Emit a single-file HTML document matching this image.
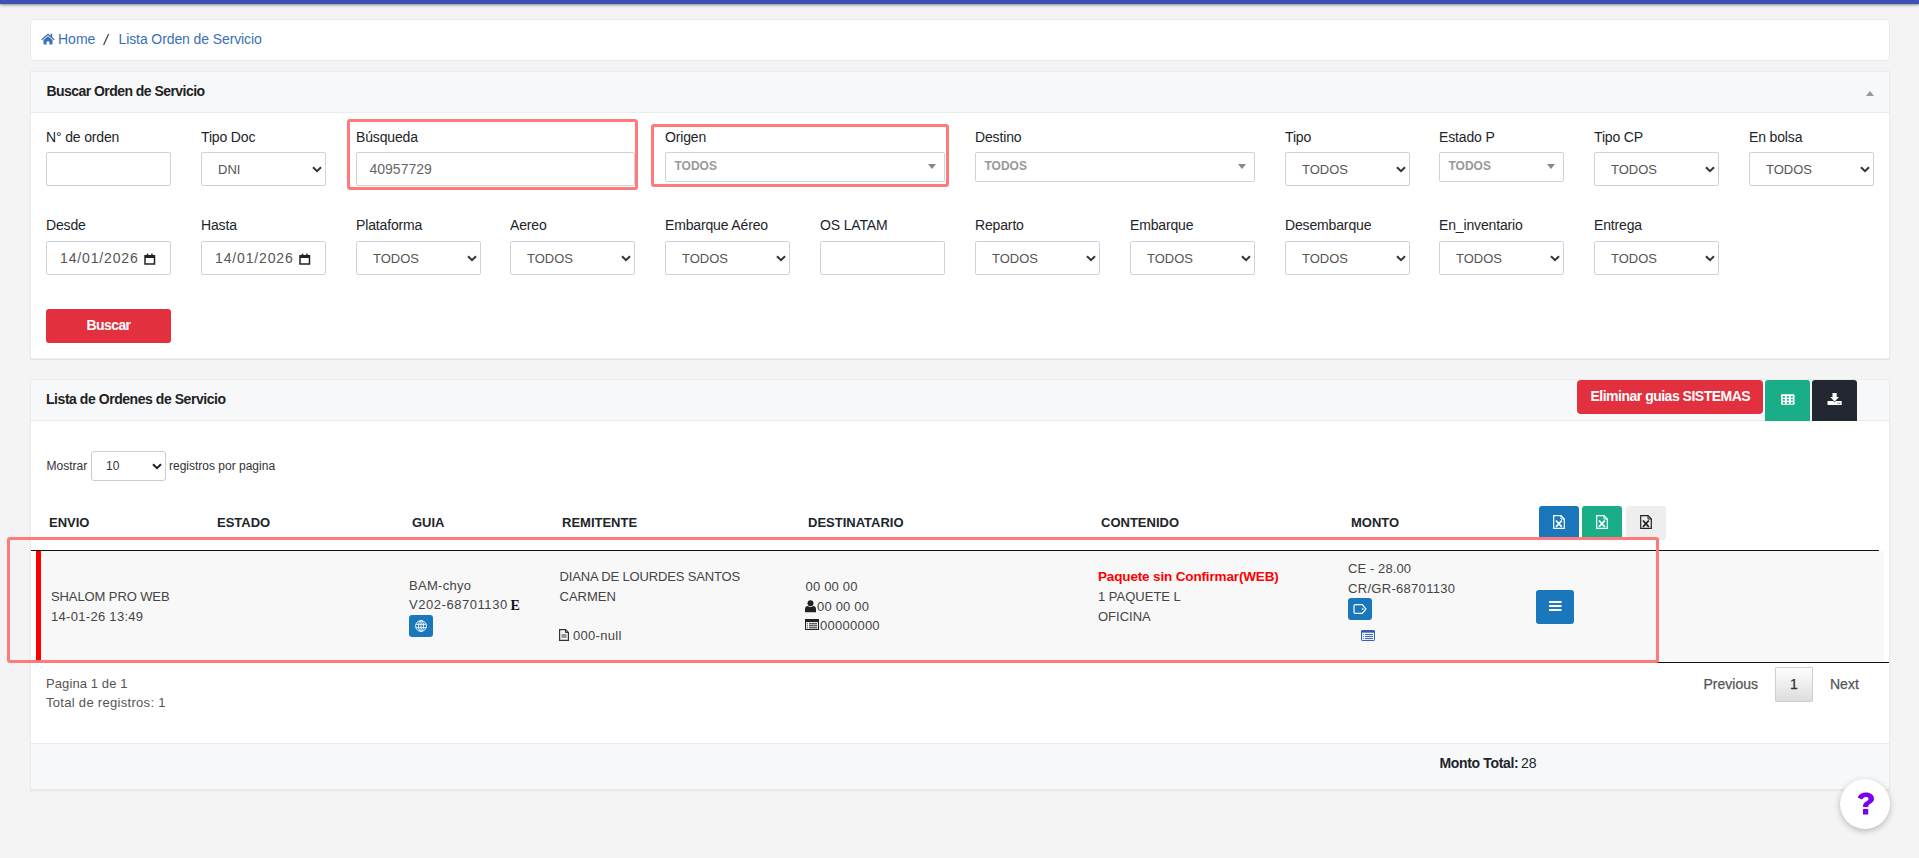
<!DOCTYPE html><html><head><meta charset="utf-8"><style>
*{box-sizing:border-box;margin:0;padding:0}
html,body{width:1919px;height:858px;overflow:hidden;background:#f4f4f4;font-family:"Liberation Sans",sans-serif;color:#212529}
.a{position:absolute;white-space:nowrap}
.b{position:absolute}
.topbar{position:absolute;left:0;top:0;width:1919px;height:4px;background:#3f51b5;box-shadow:0 1px 3px rgba(0,0,0,.45)}
.card{position:absolute;left:30px;width:1860px;background:#fff;border:1px solid #e8ebef}
.hdr{position:absolute;left:0;top:0;width:1858px;background:#f7f8fa;border-bottom:1px solid #e8ebef}
.inp{position:absolute;height:34px;border:1px solid #cbd4de;border-radius:2px;background:#fff}
.s2{position:absolute;height:30px;border:1px solid #cbd4de;border-radius:2px;background:#fff}
.tri{position:absolute;width:0;height:0;border-left:4px solid transparent;border-right:4px solid transparent;border-top:5px solid #888}
.ann{position:absolute;border:3px solid #ff7b7b;border-radius:3px}
</style></head><body>
<div class="topbar"></div>
<div class="card" style="top:19px;height:42px;border-radius:4px"></div>
<svg class="b" style="left:41px;top:33px" width="14" height="12" viewBox="0 0 14 12"><path d="M7 0.6 L0.3 6.3 L1.2 7.2 L7 2.3 L12.8 7.2 L13.7 6.3 L11.2 4.2 L11.2 0.8 L9.6 0.8 L9.6 2.8 Z M2.5 6.9 L2.5 11.6 L5.6 11.6 L5.6 8.4 L8.4 8.4 L8.4 11.6 L11.5 11.6 L11.5 6.9 L7 3.2 Z" fill="#3a70b6"/></svg>
<div class="a" style="left:58px;top:30.15px;font-size:14px;line-height:18px;color:#3a70b6;">Home</div>
<svg class="b" style="left:102px;top:33px" width="9" height="13" viewBox="0 0 9 13"><path d="M6.6 1 L1.6 12" stroke="#444" stroke-width="1.25"/></svg>
<div class="a" style="left:118.5px;top:30.15px;font-size:14px;line-height:18px;color:#3a70b6;letter-spacing:-0.1px;">Lista Orden de Servicio</div>
<div class="card" style="top:71px;height:288px;box-shadow:0 1px 1px rgba(0,0,0,.06)"><div class="hdr" style="height:41px"></div></div>
<div class="a" style="left:46.5px;top:82.15px;font-size:14px;line-height:18px;color:#222;font-weight:bold;letter-spacing:-0.55px;">Buscar Orden de Servicio</div>
<div class="tri" style="left:1866px;top:91px;border-top:none;border-bottom:5px solid #999"></div>
<div class="a" style="left:46px;top:128.15px;font-size:14px;line-height:18px;color:#212529;letter-spacing:-0.15px;">N° de orden</div>
<div class="inp" style="left:46px;top:152px;width:125px"></div>
<div class="a" style="left:201px;top:128.15px;font-size:14px;line-height:18px;color:#212529;letter-spacing:-0.15px;">Tipo Doc</div>
<div class="inp" style="left:201px;top:152px;width:125px"></div>
<div class="a" style="left:218px;top:161.00px;font-size:13px;line-height:17px;color:#555;">DNI</div>
<svg class="b" style="left:312px;top:166px" width="10" height="7" viewBox="0 0 10 7"><path d="M1 1.2 L5 5.2 L9 1.2" fill="none" stroke="#333" stroke-width="2"/></svg>
<div class="a" style="left:356px;top:128.15px;font-size:14px;line-height:18px;color:#212529;letter-spacing:-0.15px;">Búsqueda</div>
<div class="inp" style="left:356px;top:152px;width:279px"></div>
<div class="a" style="left:369.5px;top:160.15px;font-size:14px;line-height:18px;color:#666;">40957729</div>
<div class="a" style="left:665px;top:128.15px;font-size:14px;line-height:18px;color:#212529;letter-spacing:-0.15px;">Origen</div>
<div class="s2" style="left:665px;top:152px;width:280px"></div>
<div class="a" style="left:674.5px;top:157.84px;font-size:12px;line-height:16px;color:#999;font-weight:bold;">TODOS</div>
<div class="tri" style="left:928px;top:164px"></div>
<div class="a" style="left:975px;top:128.15px;font-size:14px;line-height:18px;color:#212529;letter-spacing:-0.15px;">Destino</div>
<div class="s2" style="left:975px;top:152px;width:280px"></div>
<div class="a" style="left:984.5px;top:157.84px;font-size:12px;line-height:16px;color:#999;font-weight:bold;">TODOS</div>
<div class="tri" style="left:1238px;top:164px"></div>
<div class="a" style="left:1285px;top:128.15px;font-size:14px;line-height:18px;color:#212529;letter-spacing:-0.15px;">Tipo</div>
<div class="inp" style="left:1285px;top:152px;width:125px"></div>
<div class="a" style="left:1302px;top:161.00px;font-size:13px;line-height:17px;color:#555;">TODOS</div>
<svg class="b" style="left:1396px;top:166px" width="10" height="7" viewBox="0 0 10 7"><path d="M1 1.2 L5 5.2 L9 1.2" fill="none" stroke="#333" stroke-width="2"/></svg>
<div class="a" style="left:1439px;top:128.15px;font-size:14px;line-height:18px;color:#212529;letter-spacing:-0.15px;">Estado P</div>
<div class="s2" style="left:1439px;top:152px;width:125px"></div>
<div class="a" style="left:1448.5px;top:157.84px;font-size:12px;line-height:16px;color:#999;font-weight:bold;">TODOS</div>
<div class="tri" style="left:1547px;top:164px"></div>
<div class="a" style="left:1594px;top:128.15px;font-size:14px;line-height:18px;color:#212529;letter-spacing:-0.15px;">Tipo CP</div>
<div class="inp" style="left:1594px;top:152px;width:125px"></div>
<div class="a" style="left:1611px;top:161.00px;font-size:13px;line-height:17px;color:#555;">TODOS</div>
<svg class="b" style="left:1705px;top:166px" width="10" height="7" viewBox="0 0 10 7"><path d="M1 1.2 L5 5.2 L9 1.2" fill="none" stroke="#333" stroke-width="2"/></svg>
<div class="a" style="left:1749px;top:128.15px;font-size:14px;line-height:18px;color:#212529;letter-spacing:-0.15px;">En bolsa</div>
<div class="inp" style="left:1749px;top:152px;width:125px"></div>
<div class="a" style="left:1766px;top:161.00px;font-size:13px;line-height:17px;color:#555;">TODOS</div>
<svg class="b" style="left:1860px;top:166px" width="10" height="7" viewBox="0 0 10 7"><path d="M1 1.2 L5 5.2 L9 1.2" fill="none" stroke="#333" stroke-width="2"/></svg>
<div class="a" style="left:46px;top:216.15px;font-size:14px;line-height:18px;color:#212529;letter-spacing:-0.15px;">Desde</div>
<div class="inp" style="left:46px;top:241px;width:125px"></div>
<div class="a" style="left:60px;top:249.15px;font-size:14px;line-height:18px;color:#555;letter-spacing:0.85px;">14/01/2026</div>
<svg class="b" style="left:143.5px;top:252.5px" width="12" height="12" viewBox="0 0 12 12"><path d="M1 2.8 H10.5 V11 H1 Z" fill="none" stroke="#222" stroke-width="1.5"/><rect x="1" y="2.3" width="9.5" height="2.7" fill="#222"/><rect x="2.8" y="0.6" width="1.5" height="2" fill="#222"/><rect x="7.2" y="0.6" width="1.5" height="2" fill="#222"/></svg>
<div class="a" style="left:201px;top:216.15px;font-size:14px;line-height:18px;color:#212529;letter-spacing:-0.15px;">Hasta</div>
<div class="inp" style="left:201px;top:241px;width:125px"></div>
<div class="a" style="left:215px;top:249.15px;font-size:14px;line-height:18px;color:#555;letter-spacing:0.85px;">14/01/2026</div>
<svg class="b" style="left:298.5px;top:252.5px" width="12" height="12" viewBox="0 0 12 12"><path d="M1 2.8 H10.5 V11 H1 Z" fill="none" stroke="#222" stroke-width="1.5"/><rect x="1" y="2.3" width="9.5" height="2.7" fill="#222"/><rect x="2.8" y="0.6" width="1.5" height="2" fill="#222"/><rect x="7.2" y="0.6" width="1.5" height="2" fill="#222"/></svg>
<div class="a" style="left:356px;top:216.15px;font-size:14px;line-height:18px;color:#212529;letter-spacing:-0.15px;">Plataforma</div>
<div class="inp" style="left:356px;top:241px;width:125px"></div>
<div class="a" style="left:373px;top:250.00px;font-size:13px;line-height:17px;color:#555;">TODOS</div>
<svg class="b" style="left:467px;top:255px" width="10" height="7" viewBox="0 0 10 7"><path d="M1 1.2 L5 5.2 L9 1.2" fill="none" stroke="#333" stroke-width="2"/></svg>
<div class="a" style="left:510px;top:216.15px;font-size:14px;line-height:18px;color:#212529;letter-spacing:-0.15px;">Aereo</div>
<div class="inp" style="left:510px;top:241px;width:125px"></div>
<div class="a" style="left:527px;top:250.00px;font-size:13px;line-height:17px;color:#555;">TODOS</div>
<svg class="b" style="left:621px;top:255px" width="10" height="7" viewBox="0 0 10 7"><path d="M1 1.2 L5 5.2 L9 1.2" fill="none" stroke="#333" stroke-width="2"/></svg>
<div class="a" style="left:665px;top:216.15px;font-size:14px;line-height:18px;color:#212529;letter-spacing:-0.15px;">Embarque Aéreo</div>
<div class="inp" style="left:665px;top:241px;width:125px"></div>
<div class="a" style="left:682px;top:250.00px;font-size:13px;line-height:17px;color:#555;">TODOS</div>
<svg class="b" style="left:776px;top:255px" width="10" height="7" viewBox="0 0 10 7"><path d="M1 1.2 L5 5.2 L9 1.2" fill="none" stroke="#333" stroke-width="2"/></svg>
<div class="a" style="left:820px;top:216.15px;font-size:14px;line-height:18px;color:#212529;letter-spacing:-0.15px;">OS LATAM</div>
<div class="inp" style="left:820px;top:241px;width:125px"></div>
<div class="a" style="left:975px;top:216.15px;font-size:14px;line-height:18px;color:#212529;letter-spacing:-0.15px;">Reparto</div>
<div class="inp" style="left:975px;top:241px;width:125px"></div>
<div class="a" style="left:992px;top:250.00px;font-size:13px;line-height:17px;color:#555;">TODOS</div>
<svg class="b" style="left:1086px;top:255px" width="10" height="7" viewBox="0 0 10 7"><path d="M1 1.2 L5 5.2 L9 1.2" fill="none" stroke="#333" stroke-width="2"/></svg>
<div class="a" style="left:1130px;top:216.15px;font-size:14px;line-height:18px;color:#212529;letter-spacing:-0.15px;">Embarque</div>
<div class="inp" style="left:1130px;top:241px;width:125px"></div>
<div class="a" style="left:1147px;top:250.00px;font-size:13px;line-height:17px;color:#555;">TODOS</div>
<svg class="b" style="left:1241px;top:255px" width="10" height="7" viewBox="0 0 10 7"><path d="M1 1.2 L5 5.2 L9 1.2" fill="none" stroke="#333" stroke-width="2"/></svg>
<div class="a" style="left:1285px;top:216.15px;font-size:14px;line-height:18px;color:#212529;letter-spacing:-0.15px;">Desembarque</div>
<div class="inp" style="left:1285px;top:241px;width:125px"></div>
<div class="a" style="left:1302px;top:250.00px;font-size:13px;line-height:17px;color:#555;">TODOS</div>
<svg class="b" style="left:1396px;top:255px" width="10" height="7" viewBox="0 0 10 7"><path d="M1 1.2 L5 5.2 L9 1.2" fill="none" stroke="#333" stroke-width="2"/></svg>
<div class="a" style="left:1439px;top:216.15px;font-size:14px;line-height:18px;color:#212529;letter-spacing:-0.15px;">En_inventario</div>
<div class="inp" style="left:1439px;top:241px;width:125px"></div>
<div class="a" style="left:1456px;top:250.00px;font-size:13px;line-height:17px;color:#555;">TODOS</div>
<svg class="b" style="left:1550px;top:255px" width="10" height="7" viewBox="0 0 10 7"><path d="M1 1.2 L5 5.2 L9 1.2" fill="none" stroke="#333" stroke-width="2"/></svg>
<div class="a" style="left:1594px;top:216.15px;font-size:14px;line-height:18px;color:#212529;letter-spacing:-0.15px;">Entrega</div>
<div class="inp" style="left:1594px;top:241px;width:125px"></div>
<div class="a" style="left:1611px;top:250.00px;font-size:13px;line-height:17px;color:#555;">TODOS</div>
<svg class="b" style="left:1705px;top:255px" width="10" height="7" viewBox="0 0 10 7"><path d="M1 1.2 L5 5.2 L9 1.2" fill="none" stroke="#333" stroke-width="2"/></svg>
<div class="b" style="left:46px;top:309px;width:125px;height:34px;background:#e2303f;border-radius:3px"></div>
<div class="a" style="left:0px;top:316.15px;font-size:14px;line-height:18px;color:#fff;font-weight:bold;letter-spacing:-0.6px;left:46px;width:125px;text-align:center;">Buscar</div>
<div class="card" style="top:379px;height:411px;box-shadow:0 1px 1px rgba(0,0,0,.06)"><div class="hdr" style="height:41px"></div><div class="b" style="left:0;top:363px;width:1858px;height:46px;background:#f7f8fa;border-top:1px solid #e8ebef"></div></div>
<div class="a" style="left:46px;top:390.15px;font-size:14px;line-height:18px;color:#222;font-weight:bold;letter-spacing:-0.45px;">Lista de Ordenes de Servicio</div>
<div class="b" style="left:1577px;top:380px;width:186px;height:34px;background:#e2303f;border-radius:4px"></div>
<div class="a" style="left:1590.5px;top:387.15px;font-size:14px;line-height:18px;color:#fff;font-weight:bold;letter-spacing:-0.5px;">Eliminar guias SISTEMAS</div>
<div class="b" style="left:1765px;top:380px;width:45px;height:41px;background:#1aae88;border-radius:3px 3px 0 0"></div>
<svg class="b" style="left:1781px;top:394px" width="14" height="11" viewBox="0 0 14 11"><rect x="0" y="0.2" width="13.5" height="10.6" rx="0.8" fill="#fff"/><g fill="#1aae88"><rect x="1.8" y="2" width="2" height="1.8"/><rect x="5.8" y="2" width="2" height="1.8"/><rect x="9.8" y="2" width="2" height="1.8"/><rect x="1.8" y="4.9" width="2" height="1.8"/><rect x="5.8" y="4.9" width="2" height="1.8"/><rect x="9.8" y="4.9" width="2" height="1.8"/><rect x="1.8" y="8" width="2" height="1.8"/><rect x="5.8" y="8" width="2" height="1.8"/><rect x="9.8" y="8" width="2" height="1.8"/></g></svg>
<div class="b" style="left:1812px;top:380px;width:45px;height:41px;background:#222731;border-radius:3px 3px 0 0"></div>
<svg class="b" style="left:1827px;top:392px" width="15" height="14" viewBox="0 0 15 14"><path d="M5.5 0.9 H9.7 V5 H12 L7.6 9.6 L3.2 5 H5.5 Z" fill="#fff"/><path d="M0.5 9 H6.3 L7.6 10.2 L8.9 9 H14.7 V13 H0.5 Z" fill="#fff"/><rect x="10.3" y="10.8" width="1.1" height="1.1" fill="#8a4fb0"/><rect x="12.2" y="10.8" width="1.1" height="1.1" fill="#8a4fb0"/></svg>
<div class="a" style="left:46.5px;top:457.84px;font-size:12px;line-height:16px;color:#333;">Mostrar</div>
<div class="b" style="left:91px;top:451px;width:75px;height:30px;border:1px solid #ccc;border-radius:3px;background:#fff"></div>
<div class="a" style="left:106px;top:457.84px;font-size:12px;line-height:16px;color:#333;">10</div>
<svg class="b" style="left:152px;top:463px" width="10" height="7" viewBox="0 0 10 7"><path d="M1 1.2 L5 5.2 L9 1.2" fill="none" stroke="#222" stroke-width="2"/></svg>
<div class="a" style="left:169px;top:457.84px;font-size:12px;line-height:16px;color:#333;">registros por pagina</div>
<div class="a" style="left:49px;top:514.00px;font-size:13px;line-height:17px;color:#212529;font-weight:bold;letter-spacing:0px;">ENVIO</div>
<div class="a" style="left:217px;top:514.00px;font-size:13px;line-height:17px;color:#212529;font-weight:bold;letter-spacing:0px;">ESTADO</div>
<div class="a" style="left:412px;top:514.00px;font-size:13px;line-height:17px;color:#212529;font-weight:bold;letter-spacing:0px;">GUIA</div>
<div class="a" style="left:562px;top:514.00px;font-size:13px;line-height:17px;color:#212529;font-weight:bold;letter-spacing:0px;">REMITENTE</div>
<div class="a" style="left:808px;top:514.00px;font-size:13px;line-height:17px;color:#212529;font-weight:bold;letter-spacing:0px;">DESTINATARIO</div>
<div class="a" style="left:1101px;top:514.00px;font-size:13px;line-height:17px;color:#212529;font-weight:bold;letter-spacing:0px;">CONTENIDO</div>
<div class="a" style="left:1351px;top:514.00px;font-size:13px;line-height:17px;color:#212529;font-weight:bold;letter-spacing:0px;">MONTO</div>
<div class="b" style="left:1539px;top:506px;width:40px;height:34px;background:#1a77bb;border-radius:3px"></div>
<svg class="b" style="left:1553px;top:515px" width="12" height="14" viewBox="0 0 12 14"><path d="M0.7 0.7 H8 L11.3 4 V13.3 H0.7 Z" fill="none" stroke="#fff" stroke-width="1.2"/><path d="M8 0.7 V4 H11.3" fill="none" stroke="#fff" stroke-width="1"/><path d="M3 5.5 L8.8 11.8 M8.8 5.5 L3 11.8" stroke="#fff" stroke-width="1.8"/></svg>
<div class="b" style="left:1582px;top:506px;width:40px;height:34px;background:#1aae88;border-radius:3px"></div>
<svg class="b" style="left:1596px;top:515px" width="12" height="14" viewBox="0 0 12 14"><path d="M0.7 0.7 H8 L11.3 4 V13.3 H0.7 Z" fill="none" stroke="#fff" stroke-width="1.2"/><path d="M8 0.7 V4 H11.3" fill="none" stroke="#fff" stroke-width="1"/><path d="M3 5.5 L8.8 11.8 M8.8 5.5 L3 11.8" stroke="#fff" stroke-width="1.8"/></svg>
<div class="b" style="left:1626px;top:506px;width:40px;height:34px;background:#eeeeee;border-radius:3px"></div>
<svg class="b" style="left:1640px;top:515px" width="12" height="14" viewBox="0 0 12 14"><path d="M0.7 0.7 H8 L11.3 4 V13.3 H0.7 Z" fill="none" stroke="#222" stroke-width="1.2"/><path d="M8 0.7 V4 H11.3" fill="none" stroke="#222" stroke-width="1"/><path d="M3 5.5 L8.8 11.8 M8.8 5.5 L3 11.8" stroke="#222" stroke-width="1.8"/></svg>
<div class="b" style="left:31px;top:550px;width:1848px;height:1px;background:#111"></div>
<div class="b" style="left:36px;top:551px;width:1848px;height:111px;background:#f8f8f8;border-left:5px solid #ff0000"></div>
<div class="b" style="left:31px;top:662px;width:1858px;height:1px;background:#111"></div>
<div class="a" style="left:51px;top:587.70px;font-size:13px;line-height:17px;color:#444;letter-spacing:-0.1px;">SHALOM PRO WEB</div>
<div class="a" style="left:51px;top:607.60px;font-size:13px;line-height:17px;color:#444;letter-spacing:0.3px;">14-01-26 13:49</div>
<div class="a" style="left:409px;top:577.00px;font-size:13px;line-height:17px;color:#444;letter-spacing:0.3px;">BAM-chyo</div>
<div class="a" style="left:409px;top:596.30px;font-size:13px;line-height:17px;color:#444;letter-spacing:0.55px;">V202-68701130</div>
<div class="a" style="left:510.5px;top:597.15px;font-size:14px;line-height:18px;color:#111;font-weight:bold;font-family:'Liberation Serif',serif;">E</div>
<div class="b" style="left:409px;top:615px;width:24px;height:22px;background:#1a77bb;border-radius:3px"></div>
<svg class="b" style="left:415px;top:619.5px" width="12" height="12" viewBox="0 0 12 12"><g fill="none" stroke="#fff" stroke-width="0.9"><circle cx="6" cy="6" r="5.4"/><ellipse cx="6" cy="6" rx="2.5" ry="5.4"/><path d="M0.8 4.3 H11.2 M0.8 7.7 H11.2 M6 0.6 V11.4"/></g></svg>
<div class="a" style="left:559.5px;top:568.00px;font-size:13px;line-height:17px;color:#444;letter-spacing:-0.15px;">DIANA DE LOURDES SANTOS</div>
<div class="a" style="left:559.5px;top:588.00px;font-size:13px;line-height:17px;color:#444;">CARMEN</div>
<svg class="b" style="left:559px;top:629px" width="10" height="12" viewBox="0 0 10 12"><path d="M0.6 0.6 H6.5 L9.4 3.5 V11.4 H0.6 Z" fill="none" stroke="#333" stroke-width="1.2"/><path d="M6.5 0.6 V3.5 H9.4 M2.5 6 H7.5 M2.5 8 H7.5" fill="none" stroke="#333" stroke-width="1"/></svg>
<div class="a" style="left:573px;top:627.00px;font-size:13px;line-height:17px;color:#444;letter-spacing:0.3px;">000-null</div>
<div class="a" style="left:805.5px;top:578.00px;font-size:13px;line-height:17px;color:#444;letter-spacing:0.2px;">00 00 00</div>
<svg class="b" style="left:805px;top:599.5px" width="11" height="13" viewBox="0 0 11 13"><circle cx="5.5" cy="3.2" r="3" fill="#222"/><path d="M0 12.3 V9.2 C0 7 1.2 6 2.8 6 C3.6 6.6 4.5 6.9 5.5 6.9 C6.5 6.9 7.4 6.6 8.2 6 C9.8 6 11 7 11 9.2 V12.3 Z" fill="#222"/></svg>
<div class="a" style="left:817px;top:598.00px;font-size:13px;line-height:17px;color:#444;letter-spacing:0.2px;">00 00 00</div>
<svg class="b" style="left:805px;top:619px" width="14" height="11" viewBox="0 0 14 11"><rect x="0.5" y="0.5" width="13" height="10" fill="none" stroke="#222" stroke-width="1"/><rect x="0.5" y="0.5" width="13" height="2.6" fill="#222"/><path d="M1.8 4.8 H2.8 M1.8 6.8 H2.8 M1.8 8.8 H2.8 M4 4.8 H12.2 M4 6.8 H12.2 M4 8.8 H12.2" stroke="#222" stroke-width="1"/></svg>
<div class="a" style="left:820px;top:616.50px;font-size:13px;line-height:17px;color:#444;letter-spacing:0.25px;">00000000</div>
<div class="a" style="left:1098px;top:567.57px;font-size:13.5px;line-height:17.5px;color:#ff0000;font-weight:bold;letter-spacing:-0.15px;">Paquete sin Confirmar(WEB)</div>
<div class="a" style="left:1098px;top:588.30px;font-size:13px;line-height:17px;color:#444;">1 PAQUETE L</div>
<div class="a" style="left:1098px;top:608.00px;font-size:13px;line-height:17px;color:#444;">OFICINA</div>
<div class="a" style="left:1348px;top:560.00px;font-size:13px;line-height:17px;color:#444;letter-spacing:0.1px;">CE - 28.00</div>
<div class="a" style="left:1348px;top:580.40px;font-size:13px;line-height:17px;color:#444;letter-spacing:0.3px;">CR/GR-68701130</div>
<div class="b" style="left:1348px;top:598px;width:24px;height:22px;background:#1a77bb;border-radius:3px"></div>
<svg class="b" style="left:1353px;top:604px" width="14" height="10" viewBox="0 0 14 10"><path d="M2.6 0.7 H9.3 L12.9 5 L9.3 9.3 H2.6 Q1 9.3 1 7.7 V2.3 Q1 0.7 2.6 0.7 Z" fill="none" stroke="#fff" stroke-width="1.2"/><circle cx="9.6" cy="5" r="0.9" fill="#cfe0f0"/></svg>
<svg class="b" style="left:1361px;top:630px" width="14" height="11" viewBox="0 0 14 11"><rect x="0.5" y="0.5" width="13" height="10" rx="0.6" fill="none" stroke="#3060b5" stroke-width="1"/><rect x="0.5" y="0.5" width="13" height="2.2" fill="#3060b5"/><path d="M1.8 4.6 H2.8 M1.8 6.6 H2.8 M1.8 8.6 H2.8 M4 4.6 H12 M4 6.6 H12 M4 8.6 H12" stroke="#3060b5" stroke-width="1"/></svg>
<div class="b" style="left:1536px;top:590px;width:38px;height:34px;background:#1a77bb;border-radius:3px"></div>
<svg class="b" style="left:1549px;top:600px" width="13" height="12" viewBox="0 0 13 12"><rect x="0" y="1" width="12.5" height="2" fill="#fff"/><rect x="0" y="5" width="12.5" height="2" fill="#fff"/><rect x="0" y="9" width="12.5" height="2" fill="#fff"/></svg>
<div class="a" style="left:46px;top:675.30px;font-size:13px;line-height:17px;color:#555;letter-spacing:0.1px;">Pagina 1 de 1</div>
<div class="a" style="left:46px;top:694.00px;font-size:13px;line-height:17px;color:#555;letter-spacing:0.3px;">Total de registros: 1</div>
<div class="a" style="left:1703.5px;top:675.15px;font-size:14px;line-height:18px;color:#555;letter-spacing:0px;-webkit-text-stroke:0.25px #555;">Previous</div>
<div class="b" style="left:1775px;top:667px;width:38px;height:35px;border:1px solid #cfcfcf;border-radius:1px;background:linear-gradient(#ffffff,#dcdcdc)"></div>
<div class="a" style="left:0px;top:675.15px;font-size:14px;line-height:18px;color:#333;left:1775px;width:38px;text-align:center;-webkit-text-stroke:0.25px #333;">1</div>
<div class="a" style="left:1830px;top:675.15px;font-size:14px;line-height:18px;color:#555;-webkit-text-stroke:0.25px #555;">Next</div>
<div class="a" style="left:1439.5px;top:754.15px;font-size:14px;line-height:18px;color:#212529;font-weight:bold;letter-spacing:-0.35px;">Monto Total:</div>
<div class="a" style="left:1521px;top:754.15px;font-size:14px;line-height:18px;color:#212529;">28</div>
<div class="b" style="left:1840px;top:779px;width:50px;height:50px;border-radius:50%;background:#fff;box-shadow:0 2px 6px rgba(0,0,0,.25)"></div>
<svg class="b" style="left:1857px;top:792px" width="18" height="23" viewBox="0 0 18 23"><path d="M0.6 5.4 C2 2 5 0.5 9 0.5 C13.5 0.5 17 3 17 6.5 C17 9.5 15 10.8 13 12 C11.5 12.9 11.2 13.5 11.2 15 H6 C6 12 7 10.8 9.2 9.5 C10.8 8.5 11.5 8 11.5 6.8 C11.5 5.6 10.5 5 9 5 C7.4 5 6.4 5.8 4.9 7.6 Z" fill="#7d00f2"/><rect x="6" y="17" width="5.2" height="5.5" fill="#7d00f2"/></svg>
<div class="ann" style="left:347px;top:119px;width:291px;height:71px"></div>
<div class="ann" style="left:651px;top:124px;width:298px;height:63px"></div>
<div class="ann" style="left:7px;top:537px;width:1652px;height:126px"></div>
</body></html>
